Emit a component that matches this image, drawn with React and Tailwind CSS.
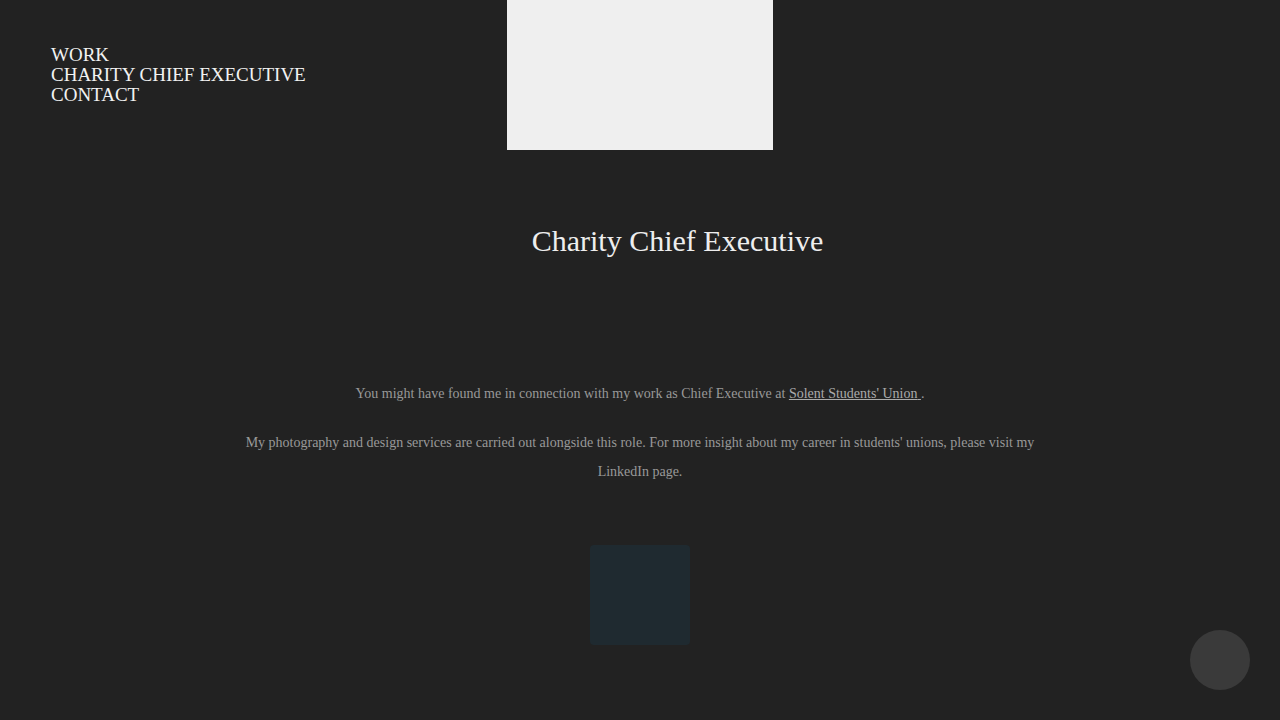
import React from "react";

const navItems = ["WORK", "CHARITY CHIEF EXECUTIVE", "CONTACT"];

const App = () => {
  return (
    <div className="min-h-[720px] bg-[#222222] font-['Liberation_Serif',serif] relative">
      {/* header row: nav on the left, cover image in the middle */}
      <div className="grid grid-cols-[1fr_266px_1fr]">
        <nav className="pt-[45px] pl-[51px] flex flex-col">
          {navItems.map((item) => (
            <a key={item} href="#" className="text-[19px] leading-[20px] text-[#f2f2f2]">
              {item}
            </a>
          ))}
        </nav>
        <div className="h-[150px] bg-[#efefef]" />
        <div />
      </div>

      <h1 className="mt-[73px] pl-[75px] text-center text-[30px] leading-[36px] text-[#eeeeee]">
        Charity Chief Executive
      </h1>

      <div className="mt-[120px] text-center text-[14px] leading-[29px] text-[#999999]">
        <p>
          You might have found me in connection with my work as Chief Executive at{" "}
          <a href="#" className="underline text-[#aaaaaa]">
            Solent Students' Union{" "}
          </a>
          .
        </p>
        <p className="mt-[20px] mx-auto max-w-[800px]">
          My photography and design services are carried out alongside this role. For more insight about my career in students' unions, please visit my LinkedIn page.
        </p>
      </div>

      <div className="mt-[59px] flex justify-center">
        <div className="w-[100px] h-[100px] rounded-[4px] bg-[#1f2a30]" />
      </div>

      <div className="fixed right-[30px] bottom-[30px] w-[60px] h-[60px] rounded-full bg-[#3a3a3a]" />
    </div>
  );
};

export default App;
